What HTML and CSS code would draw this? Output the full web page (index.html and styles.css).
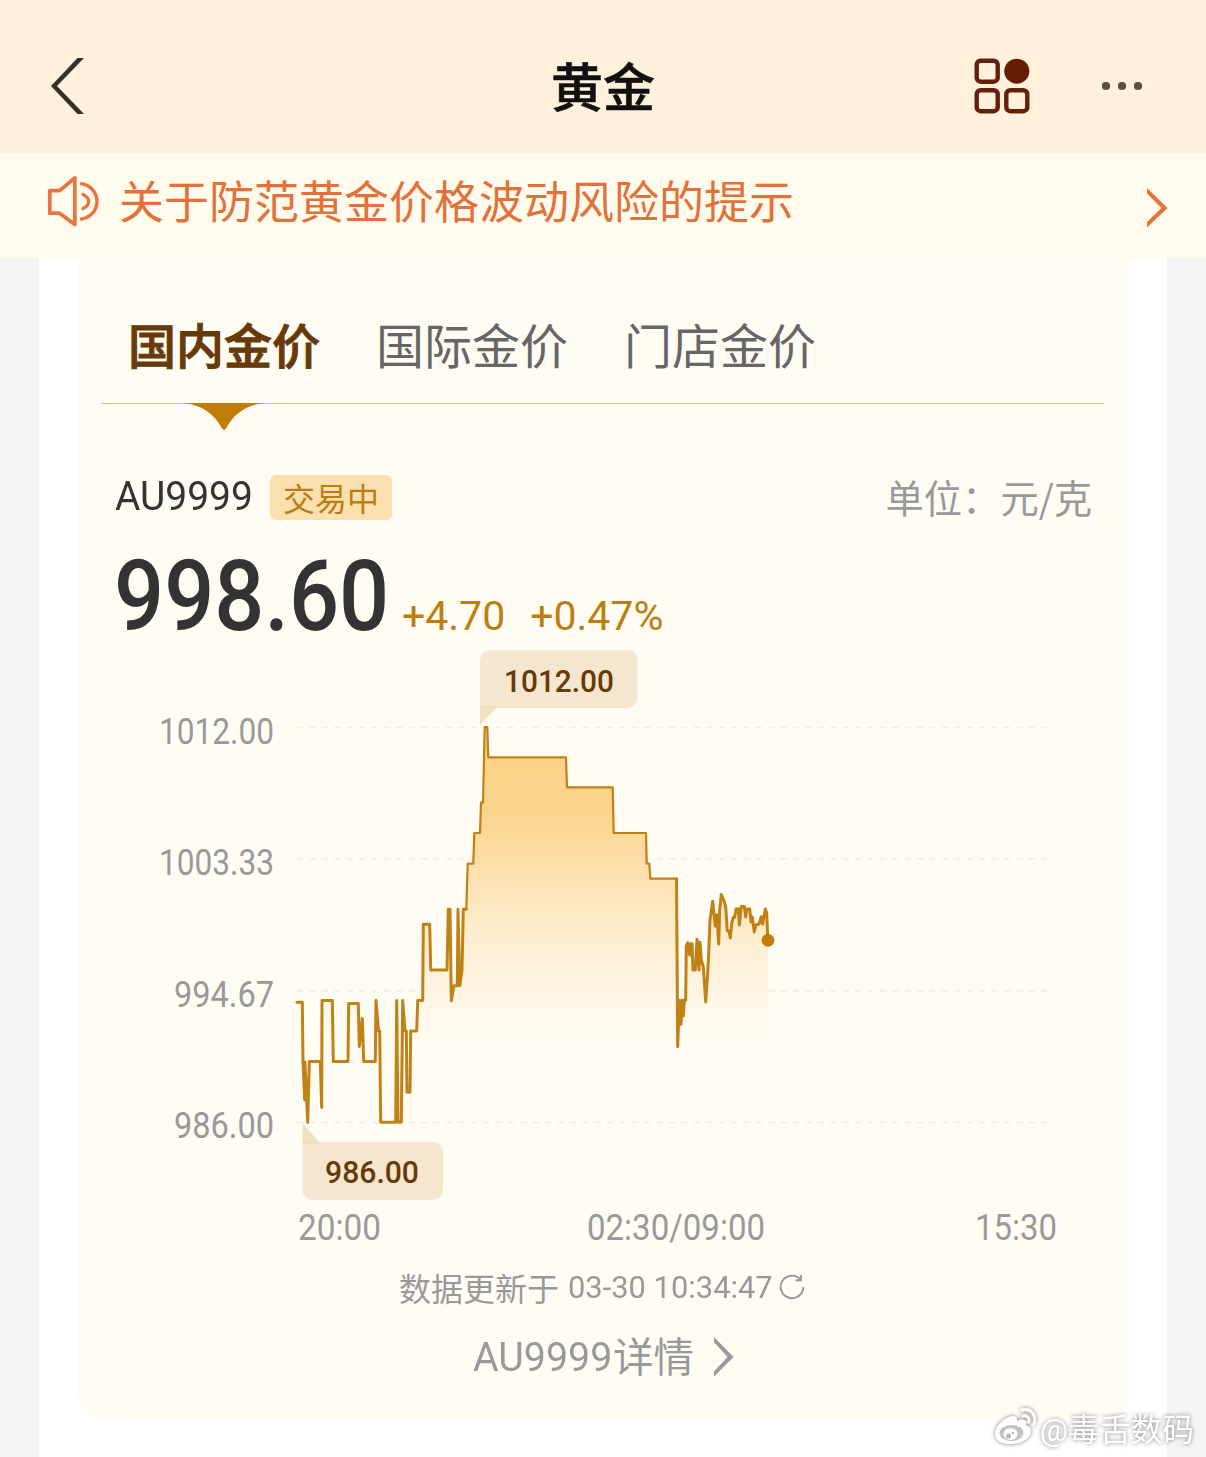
FILE: index.html
```html
<!DOCTYPE html>
<html lang="zh-CN">
<head>
    <meta charset="UTF-8">
    <title>黄金</title>
    <link rel="stylesheet" href="styles.css">
</head>
<body>
    <header class="navbar">
        <svg class="back-icon" width="36" height="60" viewBox="0 0 36 60">
            <path d="M28.500 2H35L8 30L35 58H28.500L2 30z" fill="#33302b"/>
        </svg>
        <h1 class="title">黄金</h1>
        <div class="nav-actions">
            <svg width="56" height="56" viewBox="0 0 56 56" fill="none" stroke="#64200a" stroke-width="4.4">
                <rect x="2.7" y="2.7" width="21" height="21" rx="4"/>
                <rect x="2.7" y="32.2" width="21" height="21" rx="4"/>
                <rect x="32.3" y="32.2" width="21" height="21" rx="4"/>
                <circle cx="42.8" cy="13.2" r="12.5" fill="#641c04" stroke="none"/>
            </svg>
            <svg width="42" height="10" viewBox="0 0 42 10" fill="#65483c">
                <circle cx="5" cy="5" r="4.1"/>
                <circle cx="21" cy="5" r="4.1"/>
                <circle cx="37" cy="5" r="4.1"/>
            </svg>
        </div>
    </header>
    <div class="notice">
        <svg class="notice-icon" width="54" height="54" viewBox="0 0 54 54" fill="none" stroke="#ea7440" stroke-width="3.7" stroke-linejoin="round" stroke-linecap="round">
            <path d="M2.800 15.600h9.800L27.800 3v46.500L12.600 38.200H2.800z"/>
            <path d="M34.500 8.800c8.500 1 15.500 8.500 15.500 17.600s-7 16.600-15.500 17.600" stroke-width="3.400"/>
            <path d="M36 19.500c7.500 3.500 7.500 10.500 0 14" stroke-width="3.400"/>
        </svg>
        <span class="notice-text">关于防范黄金价格波动风险的提示</span>
        <svg class="notice-arrow" width="21" height="40" viewBox="0 0 21 40">
            <path d="M0 0v5.500L14.500 20L0 34v5.500L20.500 20z" fill="#e8703a"/>
        </svg>
    </div>
    <main class="page">
        <section class="card">
            <nav class="tabs">
                <span class="tab active">国内金价</span>
                <span class="tab">国际金价</span>
                <span class="tab">门店金价</span>
                <svg class="tab-pointer" width="80" height="28" viewBox="0 0 80 28">
                    <path d="M0 0H80C63 2 50 10 42 25.500Q40 28 38 25.500C30 10 17 2 0 0z" fill="#c17d05"/>
                </svg>
            </nav>
            <div class="symbol-row">
                <span class="symbol">AU9999</span>
                <span class="badge">交易中</span>
                <span class="unit">单位：元/克</span>
            </div>
            <div class="price-row">
                <span class="price">998.60</span>
                <span class="change">+4.70</span>
                <span class="change">+0.47%</span>
            </div>
            <svg class="chart" width="1051" height="610" viewBox="78 640 1051 610">
                <defs>
                    <linearGradient id="area" gradientUnits="userSpaceOnUse" x1="0" y1="727" x2="0" y2="1080">
                        <stop offset="0" stop-color="#fcd184"/>
                        <stop offset="0.24" stop-color="#fbd48c"/>
                        <stop offset="0.5" stop-color="#fde7c0"/>
                        <stop offset="0.75" stop-color="#fff3df" stop-opacity="0.8"/>
                        <stop offset="1" stop-color="#fffcf4" stop-opacity="0"/>
                    </linearGradient>
                </defs>
                <g class="grid">
                    <path d="M297 727.500H1050M297 859H1050M297 991H1050M297 1122.500H1050"/>
                </g>
                <path fill="url(#area)" d="M296 1002.300L302.300 1002.300L303 1061.500L304.700 1100L307.700 1122.500L309.300 1061.500H320.300L321.700 1107.500L322 1000.500H332.300L333.300 1061.500H348L348.700 1003.500H358.300L359.300 1046.500L362.300 1018.500L363.700 1061.500H375.300L376 1000.500L378.500 1031H379.700L380.700 1122.300H395.700L396.700 1000.500L398 1122.300H401.300L402.700 1000.500L405 1031H406.300L407 1092.300H410L410.700 1031H416.700L417.700 1000.500H422.700L423.300 924.300H429.700L430.700 970H447L448.300 909.300H450L451.300 1000.700L454 985.700H457.300L458 909.300L459.700 985.700L462 970L463.300 909.300H466.300L467.700 863.700H473.300L474.300 833H480L481 802.700H483L484.700 727H487.300L488.300 757.300H566L567 787.300H612.700L613.700 833H646L646.700 863.700H649.300L650.300 878.700H676.500L677.700 1046.700L679.300 1000.300L686 1000.300L686.300 946L687.700 942.700L692 943.700L693 970H695.300L697 939.300L700 942.300L701.300 960L705.700 1002L708.700 953.300L710 920L712.700 901.300L715.300 926L717 914.700L718.700 944L719.700 910L721.300 894.500L725 903L727.300 931H729L730.300 938L733.300 917.300L736 909H738.300L739.300 925L741.300 906.500H744.300L745.700 917L746.700 909H749.700L751 922L754.300 932L755.700 925L759 924L761.300 916.700L762.700 924L765.300 909L768 940V1080H296z"/>
                <path class="line busy" d="M297 1002.300H302.300L303 1061.500L304.700 1100L304.900 1062L307.700 1122.500L309.300 1061.500H320.300L321.700 1107.500L322 1000.500H332.300L333.300 1061.500H348L348.700 1003.500H358.300L359.300 1046.500L362.300 1018.500L363.700 1061.500H375.300L376 1000.500L378.500 1031H379.700L380.700 1122.300H395.700L396.700 1000.500L398 1122.300H401.300L402.700 1000.500L405 1031H406.300L407 1092.300H410L410.700 1031H416.700L417.700 1000.500H422.700L423.300 924.300H429.700L430.700 970H447L448.300 909.300H450L451.300 1000.700L454 985.700H457.300L458 909.300L459.700 985.700L462 970L463.300 909.300H466.300"/>
                <path class="line" d="M466.300 909.300L467.700 863.700H473.300L474.300 833H480L481 802.700H483L484.700 727H487.300L488.300 757.300H566L567 787.300H612.700L613.700 833H646L646.700 863.700H649.300L650.300 878.700H676.500"/>
                <path class="line busy" d="M676.500 878.700L677.700 1046.700L679.300 1000.300L681 1024.300L682.300 1000.300L683.300 1016L684.300 1000.300H685.700L686.300 946L687.700 942.700L689.700 955L690.700 943.700H692L693 970H695.300L697 939.300L699 970L700 942.300L701.300 960L703.300 966.700L705.700 1002L707.700 973.300L708.700 953.300L710 920L712.700 901.300L715.300 926L717 914.700L718.700 944L719.700 910L721.300 894.500L724.300 901.700L725.700 907L727.300 931H729L730.300 938L731.700 923.300L733.300 917.300H734.700L736 909H738.300L739.300 925L741.300 906.500H744.300L745.700 917L746.700 909H749.700L751 922L752.300 917L754.300 932L755.700 925L759 924L761.300 916.700L762.700 924L765.300 909L766.700 913L767.700 937"/>
                <circle cx="768" cy="940.300" r="6.400" fill="#c17d05"/>

                <g class="axis">
                    <text x="159" y="743.500" textLength="115" lengthAdjust="spacingAndGlyphs">1012.00</text>
                    <text x="159" y="875" textLength="115" lengthAdjust="spacingAndGlyphs">1003.33</text>
                    <text x="174" y="1007" textLength="100" lengthAdjust="spacingAndGlyphs">994.67</text>
                    <text x="174" y="1138" textLength="100" lengthAdjust="spacingAndGlyphs">986.00</text>
                    <text x="298" y="1239.500" textLength="83" lengthAdjust="spacingAndGlyphs">20:00</text>
                    <text x="587" y="1239.500" textLength="178" lengthAdjust="spacingAndGlyphs">02:30/09:00</text>
                    <text x="975" y="1239.500" textLength="82" lengthAdjust="spacingAndGlyphs">15:30</text>
                </g>

                <!-- high / low markers -->
                <g class="marker">
                    <path d="M480 708V660a10 10 0 0 1 10-10H627.500a10 10 0 0 1 10 10V698a10 10 0 0 1-10 10z"/>
                    <path class="tip" d="M480 706H498L480 725z"/>
                    <text x="504" y="692" textLength="110" lengthAdjust="spacingAndGlyphs">1012.00</text>
                    <path d="M302.500 1142H433a10 10 0 0 1 10 10V1190a10 10 0 0 1-10 10H312.500a10 10 0 0 1-10-10z"/>
                    <path class="tip" d="M302.500 1123L321 1144H302.500z"/>
                    <text x="325" y="1183" textLength="94" lengthAdjust="spacingAndGlyphs">986.00</text>
                </g>
            </svg>
            <div class="updated">
                <span>数据更新于</span>
                <span class="updated-time">03-30 10:34:47</span>
                <svg class="refresh" width="26" height="26" viewBox="0 0 26 26" fill="none" stroke="#999" stroke-width="1.900">
                    <path d="M21.500 5.500A11.300 11.300 0 1 0 24.300 13"/>
                    <path d="M22 1V6.300H16.500"/>
                </svg>
            </div>
            <div class="detail-link">
                <span class="detail-code">AU9999</span><span class="detail-label">详情</span>
                <svg class="detail-arrow" width="21" height="40" viewBox="0 0 21 40">
                    <path d="M1 0v5L14.500 20L1 34.500V39.500L20.500 20z" fill="#999"/>
                </svg>
            </div>
        </section>
    </main>
    <div class="watermark">
        <svg width="46" height="40" viewBox="0 0 46 40">
            <path d="M16 10C8 13 1 21 2 28C3 35 11 38 20 37C31 36 38 30 38 24C38 20 35 19 33 18C35 13 31 11 24 14C25 9 21 8 16 10z" fill="#fff"/>
            <ellipse cx="18.500" cy="26" rx="12" ry="8" fill="#c4c4c4"/>
            <ellipse cx="17.500" cy="27" rx="7" ry="6" fill="#fff"/>
            <circle cx="15.500" cy="29" r="2.600" fill="#bbb"/>
            <circle cx="20" cy="26" r="1.200" fill="#bbb"/>
            <path d="M29 3C38 1 44 8 41 17M30 9C34 8 37 11 35.500 15" fill="none" stroke="#fff" stroke-width="3" stroke-linecap="round"/>
        </svg>
        <span>@毒舌数码</span>
    </div>
</body>
</html>
```

FILE: styles.css
```css
* {
    box-sizing: border-box;
}
body {
    margin: 0;
    height: 1457px;
    position: relative;
    overflow: hidden;
    display: flex;
    flex-direction: column;
    background-color: #f4f4f4;
    font-family: Roboto, "Noto Sans CJK SC", sans-serif;
}
svg {
    display: block;
    flex-shrink: 0;
}
.navbar {
    display: grid;
    grid-template-columns: 1fr auto 1fr;
    align-items: center;
    height: 153px;
    padding: 19px 63px 0 49px;
    background-color: #fff1dc;
}
.title {
    margin: 8px -14px 0 0;
    font-size: 52px;
    font-weight: 500;
    line-height: 60px;
    color: #111;
    -webkit-text-stroke: 0.6px #111;
}
.nav-actions {
    display: flex;
    align-items: center;
    justify-content: flex-end;
    gap: 71px;
}
.notice {
    display: flex;
    align-items: center;
    height: 105px;
    padding: 0 38px 0 47px;
    background-color: #fffcee;
    color: #e4703a;
}
.notice-icon {
    margin-top: -8px;
}
.notice-text {
    flex: 1;
    margin: -4px 0 0 18px;
    font-size: 45px;
    line-height: 60px;
}
.notice-arrow {
    margin-top: 4px;
}
.page {
    flex: 1;
    margin: 0 39px;
    padding: 0 38px 0 39px;
    background-color: #fff;
}
.card {
    height: 1160px;
    border-radius: 0 0 24px 24px;
    background-color: #fffcf4;
}
.tabs {
    position: relative;
    display: flex;
    gap: 56px;
    height: 146px;
    margin: 0 25px 0 24px;
    padding: 55px 0 0 26px;
    border-bottom: 1px solid #e0b878;
    font-size: 48px;
    line-height: 70px;
    color: #666;
}
.tab.active {
    font-weight: 500;
    color: #673a08;
    -webkit-text-stroke: 1px #673a08;
}
.tab-pointer {
    position: absolute;
    left: 82px;
    top: 145px;
}
.symbol-row {
    display: flex;
    align-items: center;
    height: 46px;
    margin-top: 70px;
    padding: 0 37px;
}
.symbol {
    width: 155px;
    font-size: 41px;
    font-weight: 400;
    color: #333;
    transform: scaleX(0.95);
    transform-origin: left;
    margin-top: -3px;
}
.badge {
    width: 122px;
    height: 45px;
    border-radius: 6px;
    background-color: #fae0af;
    font-size: 32px;
    line-height: 50px;
    text-align: center;
    color: #bc7d12;
}
.unit {
    margin: -2px 0 0 auto;
    font-family: "Noto Sans CJK SC", sans-serif;
    font-size: 38.3px;
    color: #999;
}
.price-row {
    display: flex;
    align-items: baseline;
    height: 120px;
    padding: 20px 37px 0 36px;
}
.price {
    width: 288px;
    font-size: 98px;
    font-weight: 550;
    line-height: 114px;
    color: #333;
    transform: scaleX(0.9);
    transform-origin: left;
}
.change {
    margin-right: 25px;
    font-size: 41px;
    font-weight: 450;
    color: #bd7e10;
}
.grid path {
    stroke: #efede8;
    stroke-width: 1.6;
    stroke-dasharray: 6.2 6.2;
}
.line {
    fill: none;
    stroke: #c08216;
    stroke-width: 2.2;
    stroke-linejoin: round;
    stroke-linecap: round;
}
.line.busy {
    stroke-width: 3;
}
.axis text {
    font-size: 36px;
    fill: #999;
}
.marker path {
    fill: #f5e6cf;
}
.marker .tip {
    fill: #ecd8b0;
    fill-opacity: 0.75;
}
.marker text {
    font-size: 32px;
    font-weight: 500;
    fill: #673a08;
}
.updated {
    display: flex;
    align-items: center;
    height: 48px;
    margin-top: 13px;
    padding-left: 321px;
    font-size: 32px;
    color: #999;
}
.updated-time {
    width: 205px;
    margin: 0 6px 0 9px;
    white-space: nowrap;
    transform: scaleX(0.965);
    transform-origin: left;
}
.detail-link {
    display: flex;
    align-items: center;
    height: 60px;
    margin-top: 16px;
    padding-left: 395px;
    font-size: 41px;
    color: #999;
}
.detail-code {
    width: 140px;
    transform: scaleX(0.96);
    transform-origin: left;
}
.detail-label {
    margin-top: -5px;
    font-size: 40.5px;
}
.detail-arrow {
    margin: -1px 0 0 19px;
}
.watermark {
    position: absolute;
    right: 12px;
    bottom: 7px;
    display: flex;
    align-items: center;
    gap: 1px;
    font-size: 31.5px;
    font-weight: 400;
    color: #fff;
    filter: drop-shadow(0 0 2px rgba(0, 0, 0, 0.5));
}
```
